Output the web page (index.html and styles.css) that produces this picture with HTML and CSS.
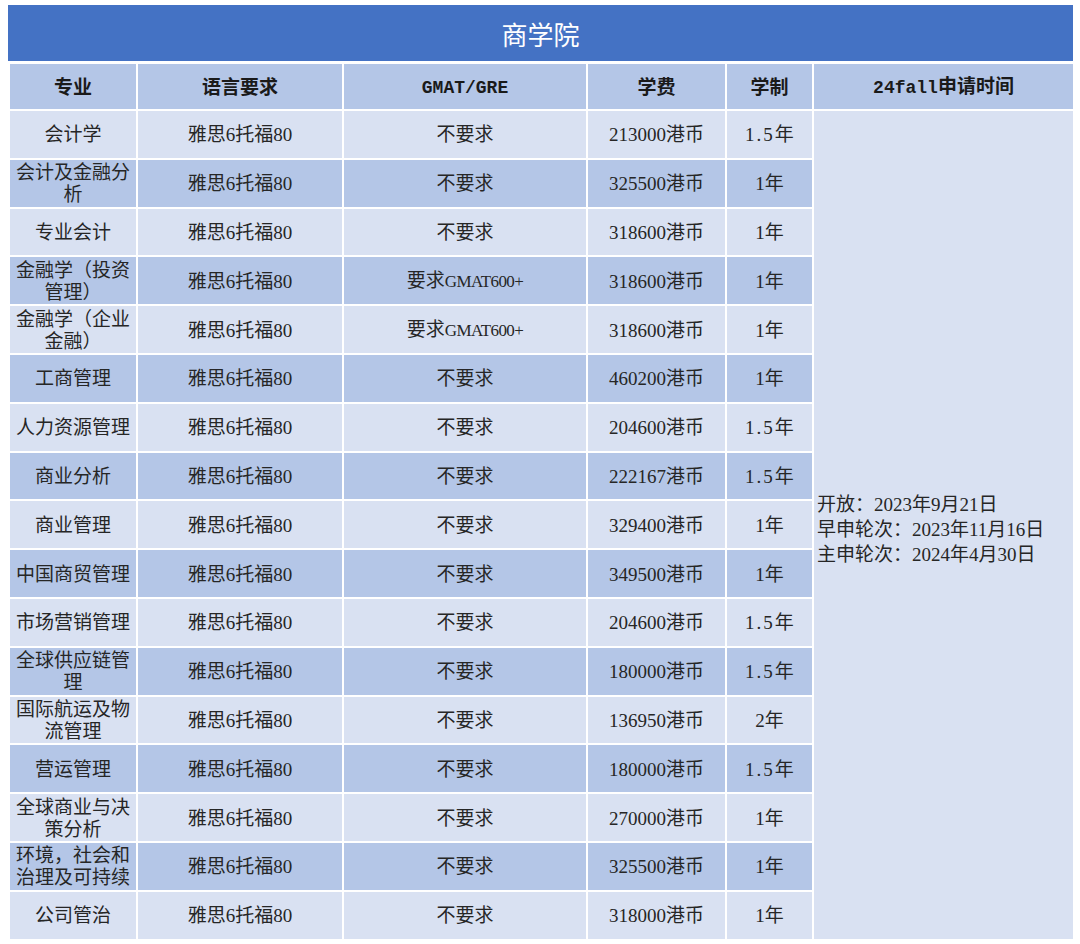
FILE: index.html
```html
<!DOCTYPE html>
<html lang="zh-CN">
<head>
<meta charset="utf-8">
<title>商学院</title>
<link rel="stylesheet" href="styles.css">
</head>
<body>
<div class="sheet">
  <div class="title">商学院</div>
  <table class="grid">
    <colgroup>
      <col class="c1"><col class="c2"><col class="c3"><col class="c4"><col class="c5"><col class="c6">
    </colgroup>
    <thead>
      <tr>
        <th>专业</th>
        <th>语言要求</th>
        <th><span class="mono">GMAT/GRE</span></th>
        <th>学费</th>
        <th>学制</th>
        <th><span class="mono">24fall</span>申请时间</th>
      </tr>
    </thead>
    <tbody>
      <tr class="lt">
        <td>会计学</td><td>雅思6托福80</td><td>不要求</td><td>213000港币</td><td><span class="dec">1.5</span>年</td>
        <td class="dates" rowspan="17">开放：2023年9月21日<br>早申轮次：2023年11月16日<br>主申轮次：2024年4月30日</td>
      </tr>
      <tr class="dk"><td>会计及金融分析</td><td>雅思6托福80</td><td>不要求</td><td>325500港币</td><td>1年</td></tr>
      <tr class="lt"><td>专业会计</td><td>雅思6托福80</td><td>不要求</td><td>318600港币</td><td>1年</td></tr>
      <tr class="dk"><td>金融学（投资管理）</td><td>雅思6托福80</td><td>要求<span class="lat">GMAT600+</span></td><td>318600港币</td><td>1年</td></tr>
      <tr class="lt"><td>金融学（企业金融）</td><td>雅思6托福80</td><td>要求<span class="lat">GMAT600+</span></td><td>318600港币</td><td>1年</td></tr>
      <tr class="dk"><td>工商管理</td><td>雅思6托福80</td><td>不要求</td><td>460200港币</td><td>1年</td></tr>
      <tr class="lt"><td>人力资源管理</td><td>雅思6托福80</td><td>不要求</td><td>204600港币</td><td><span class="dec">1.5</span>年</td></tr>
      <tr class="dk"><td>商业分析</td><td>雅思6托福80</td><td>不要求</td><td>222167港币</td><td><span class="dec">1.5</span>年</td></tr>
      <tr class="lt"><td>商业管理</td><td>雅思6托福80</td><td>不要求</td><td>329400港币</td><td>1年</td></tr>
      <tr class="dk"><td>中国商贸管理</td><td>雅思6托福80</td><td>不要求</td><td>349500港币</td><td>1年</td></tr>
      <tr class="lt"><td>市场营销管理</td><td>雅思6托福80</td><td>不要求</td><td>204600港币</td><td><span class="dec">1.5</span>年</td></tr>
      <tr class="dk"><td>全球供应链管理</td><td>雅思6托福80</td><td>不要求</td><td>180000港币</td><td><span class="dec">1.5</span>年</td></tr>
      <tr class="lt"><td>国际航运及物流管理</td><td>雅思6托福80</td><td>不要求</td><td>136950港币</td><td>2年</td></tr>
      <tr class="dk"><td>营运管理</td><td>雅思6托福80</td><td>不要求</td><td>180000港币</td><td><span class="dec">1.5</span>年</td></tr>
      <tr class="lt"><td>全球商业与决策分析</td><td>雅思6托福80</td><td>不要求</td><td>270000港币</td><td>1年</td></tr>
      <tr class="dk"><td>环境，社会和治理及可持续</td><td>雅思6托福80</td><td>不要求</td><td>325500港币</td><td>1年</td></tr>
      <tr class="lt"><td>公司管治</td><td>雅思6托福80</td><td>不要求</td><td>318000港币</td><td>1年</td></tr>
    </tbody>
  </table>
</div>
</body>
</html>
```
FILE: styles.css
```css
html, body {
  margin: 0;
  padding: 0;
  background: #ffffff;
}

body {
  font-family: "Liberation Serif", "Noto Sans CJK SC", serif;
  color: #262626;
}

.sheet {
  padding: 5px 0 0 8px;
  width: 1065px;
}

.title {
  height: 56px;
  box-sizing: border-box;
  padding-top: 8px;
  background: #4472c4;
  color: #ffffff;
  font-size: 26px;
  line-height: 48px;
  text-align: center;
  margin-bottom: 1px;
}

.grid {
  width: 1065px;
  table-layout: fixed;
  border-collapse: collapse;
}

.c1 { width: 128px; }
.c2 { width: 206px; }
.c3 { width: 244px; }
.c4 { width: 139px; }
.c5 { width: 87px; }
.c6 { width: 261px; }

.grid th,
.grid td {
  border: 2px solid #ffffff;
  padding: 2px 4px 0;
  text-align: center;
  vertical-align: middle;
  font-size: 19px;
  line-height: 22px;
}

.grid thead tr {
  height: 47px;
}

.grid th {
  background: #b4c6e7;
  font-weight: bold;
  color: #1a1a1a;
}

.grid tbody tr {
  height: 48.8px;
}

.lt td { background: #d9e1f2; }
.dk td { background: #b4c6e7; }

.lat {
  font-size: 17px;
  letter-spacing: -0.6px;
}

.dec {
  letter-spacing: 2px;
}

.mono {
  font-family: "Liberation Mono", "Noto Sans CJK SC", monospace;
  font-size: 18px;
}

.grid td.dates {
  background: #d9e1f2;
  text-align: left;
  line-height: 25px;
  padding: 9px 4px 0 3px;
}
```
